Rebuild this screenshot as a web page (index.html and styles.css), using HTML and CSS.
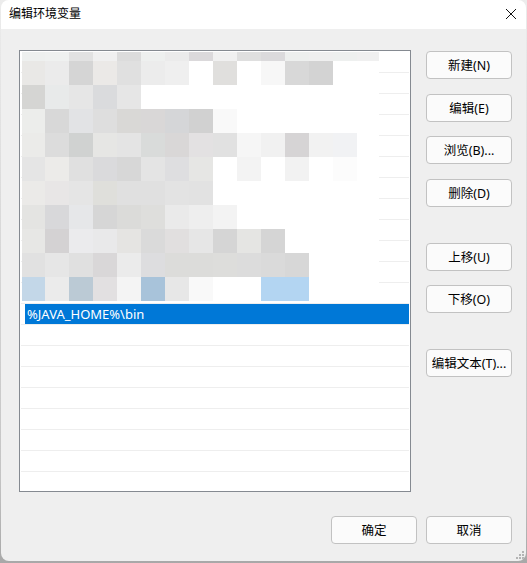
FILE: index.html
```html
<!DOCTYPE html>
<html lang="zh-CN">
<head>
<meta charset="utf-8">
<title>编辑环境变量</title>
<link rel="stylesheet" href="styles.css">
</head>
<body>
<div class="window">
  <header class="titlebar">
    <span class="title">编辑环境变量</span>
    <svg class="close" width="10" height="10" viewBox="0 0 10 10"><path d="M0 0L10 10M10 0L0 10" stroke="#111" stroke-width="1" fill="none"/></svg>
  </header>
  <main class="body">
    <div class="top">
      <div class="list">
        <div class="row"></div><div class="row"></div><div class="row"></div><div class="row"></div>
        <div class="row"></div><div class="row"></div><div class="row"></div><div class="row"></div>
        <div class="row"></div><div class="row"></div><div class="row"></div><div class="row"></div>
        <div class="row"><div class="selected">%JAVA_HOME%\bin</div></div>
        <div class="row"></div><div class="row"></div><div class="row"></div><div class="row"></div>
        <div class="row"></div><div class="row"></div><div class="row"></div>
        <svg class="mosaic" width="357" height="249" viewBox="0 0 357 249" shape-rendering="crispEdges">
          <rect width="357" height="249" fill="#fff"/>
          <g>
            <rect x="0" y="0" width="23" height="9" fill="#eef0ef"/><rect x="23" y="0" width="24" height="9" fill="#eff1f0"/><rect x="47" y="0" width="24" height="9" fill="#e2e2e2"/><rect x="71" y="0" width="24" height="9" fill="#f0f0f0"/><rect x="95" y="0" width="24" height="9" fill="#dcdcdc"/><rect x="119" y="0" width="24" height="9" fill="#eef0ef"/><rect x="143" y="0" width="24" height="9" fill="#ebebeb"/><rect x="167" y="0" width="24" height="9" fill="#dbd9db"/><rect x="191" y="0" width="24" height="9" fill="#f0f0f0"/><rect x="215" y="0" width="24" height="9" fill="#dfdfdf"/><rect x="239" y="0" width="24" height="9" fill="#dbdadc"/><rect x="263" y="0" width="24" height="9" fill="#edefee"/><rect x="287" y="0" width="24" height="9" fill="#efefef"/><rect x="311" y="0" width="24" height="9" fill="#eef0ef"/><rect x="335" y="0" width="22" height="9" fill="#f0f0f0"/>
          </g>
          <g>
            <rect x="0" y="9" width="23" height="24" fill="#e9e8e6"/><rect x="23" y="9" width="24" height="24" fill="#ebebeb"/><rect x="47" y="9" width="24" height="24" fill="#d5d5d5"/><rect x="71" y="9" width="24" height="24" fill="#ebe9e7"/><rect x="95" y="9" width="24" height="24" fill="#e0e0e0"/><rect x="119" y="9" width="24" height="24" fill="#ececec"/><rect x="143" y="9" width="24" height="24" fill="#efefef"/><rect x="191" y="9" width="24" height="24" fill="#e0dfdd"/><rect x="239" y="9" width="24" height="24" fill="#f7f7f7"/><rect x="263" y="9" width="24" height="24" fill="#d8d8d8"/><rect x="287" y="9" width="24" height="24" fill="#d3d3d3"/>
          </g>
          <g>
            <rect x="0" y="33" width="23" height="24" fill="#d5d5d3"/><rect x="23" y="33" width="24" height="24" fill="#e8eaea"/><rect x="47" y="33" width="24" height="24" fill="#e6e6e6"/><rect x="71" y="33" width="24" height="24" fill="#dadbdd"/><rect x="95" y="33" width="24" height="24" fill="#e6e6e6"/>
          </g>
          <g>
            <rect x="0" y="57" width="23" height="24" fill="#ecedeb"/><rect x="23" y="57" width="24" height="24" fill="#d8d8d8"/><rect x="47" y="57" width="24" height="24" fill="#e2e3e5"/><rect x="71" y="57" width="24" height="24" fill="#dedede"/><rect x="95" y="57" width="24" height="24" fill="#d9d8d6"/><rect x="119" y="57" width="24" height="24" fill="#d9d7d7"/><rect x="143" y="57" width="24" height="24" fill="#d5d6d8"/><rect x="167" y="57" width="24" height="24" fill="#d1d1d1"/><rect x="191" y="57" width="24" height="24" fill="#f9f9f9"/>
          </g>
          <g>
            <rect x="0" y="81" width="23" height="24" fill="#ebebe9"/><rect x="23" y="81" width="24" height="24" fill="#dcdcdc"/><rect x="47" y="81" width="24" height="24" fill="#d0d2d1"/><rect x="71" y="81" width="24" height="24" fill="#e6e6e4"/><rect x="95" y="81" width="24" height="24" fill="#e4e4e4"/><rect x="119" y="81" width="24" height="24" fill="#d9dbda"/><rect x="143" y="81" width="24" height="24" fill="#d9d7d7"/><rect x="167" y="81" width="24" height="24" fill="#e3e1e2"/><rect x="191" y="81" width="24" height="24" fill="#e1e1e1"/><rect x="215" y="81" width="24" height="24" fill="#f6f6f6"/><rect x="239" y="81" width="24" height="24" fill="#f1f1f1"/><rect x="263" y="81" width="24" height="24" fill="#d6d4d5"/><rect x="287" y="81" width="24" height="24" fill="#f2f2f2"/><rect x="311" y="81" width="24" height="24" fill="#f1f2f4"/>
          </g>
          <g>
            <rect x="0" y="105" width="23" height="24" fill="#e5e5e5"/><rect x="23" y="105" width="24" height="24" fill="#ecebe9"/><rect x="47" y="105" width="24" height="24" fill="#e0e0e0"/><rect x="71" y="105" width="24" height="24" fill="#dadadc"/><rect x="95" y="105" width="24" height="24" fill="#d7d7d7"/><rect x="119" y="105" width="24" height="24" fill="#e4e4e4"/><rect x="143" y="105" width="24" height="24" fill="#dedee0"/><rect x="167" y="105" width="24" height="24" fill="#e6e6e4"/><rect x="215" y="105" width="24" height="24" fill="#f3f3f3"/><rect x="263" y="105" width="24" height="24" fill="#f2f2f2"/><rect x="311" y="105" width="24" height="24" fill="#fcfcfc"/>
          </g>
          <g>
            <rect x="0" y="129" width="23" height="24" fill="#ebeae8"/><rect x="23" y="129" width="24" height="24" fill="#e8e6e6"/><rect x="47" y="129" width="24" height="24" fill="#e5e5e5"/><rect x="71" y="129" width="24" height="24" fill="#dfdfdb"/><rect x="95" y="129" width="24" height="24" fill="#e0e0e0"/><rect x="119" y="129" width="24" height="24" fill="#e0e0e0"/><rect x="143" y="129" width="24" height="24" fill="#e3e3e3"/><rect x="167" y="129" width="24" height="24" fill="#e2e2e2"/>
          </g>
          <g>
            <rect x="0" y="153" width="23" height="24" fill="#e4e4e2"/><rect x="23" y="153" width="24" height="24" fill="#d8d8da"/><rect x="47" y="153" width="24" height="24" fill="#e6e7e9"/><rect x="71" y="153" width="24" height="24" fill="#d6d6d6"/><rect x="95" y="153" width="24" height="24" fill="#dbdbd9"/><rect x="119" y="153" width="24" height="24" fill="#dededc"/><rect x="143" y="153" width="24" height="24" fill="#eaeaea"/><rect x="167" y="153" width="24" height="24" fill="#eeeeee"/><rect x="191" y="153" width="24" height="24" fill="#f3f3f3"/>
          </g>
          <g>
            <rect x="0" y="177" width="23" height="24" fill="#e7e7e5"/><rect x="23" y="177" width="24" height="24" fill="#d4d2d3"/><rect x="47" y="177" width="24" height="24" fill="#ebebed"/><rect x="71" y="177" width="24" height="24" fill="#e9e9ea"/><rect x="95" y="177" width="24" height="24" fill="#e5e4e2"/><rect x="119" y="177" width="24" height="24" fill="#dadada"/><rect x="143" y="177" width="24" height="24" fill="#e1dfdf"/><rect x="167" y="177" width="24" height="24" fill="#e6e6e6"/><rect x="191" y="177" width="24" height="24" fill="#d5d5d5"/><rect x="215" y="177" width="24" height="24" fill="#e5e5e3"/><rect x="239" y="177" width="24" height="24" fill="#d5d5d5"/>
          </g>
          <g>
            <rect x="0" y="201" width="23" height="24" fill="#e1e1e1"/><rect x="23" y="201" width="24" height="24" fill="#e6e6e6"/><rect x="47" y="201" width="24" height="24" fill="#e0e0e0"/><rect x="71" y="201" width="24" height="24" fill="#d9d7d8"/><rect x="95" y="201" width="24" height="24" fill="#ebebeb"/><rect x="119" y="201" width="24" height="24" fill="#dddddf"/><rect x="143" y="201" width="24" height="24" fill="#dcdcda"/><rect x="167" y="201" width="24" height="24" fill="#dcdcda"/><rect x="191" y="201" width="24" height="24" fill="#dddddb"/><rect x="215" y="201" width="24" height="24" fill="#dcdcdc"/><rect x="239" y="201" width="24" height="24" fill="#dadada"/><rect x="263" y="201" width="24" height="24" fill="#d7d7d7"/>
          </g>
          <g>
            <rect x="0" y="225" width="23" height="24" fill="#c3d7e8"/><rect x="23" y="225" width="24" height="24" fill="#ebebeb"/><rect x="47" y="225" width="24" height="24" fill="#bbcad5"/><rect x="71" y="225" width="24" height="24" fill="#e2e0e1"/><rect x="95" y="225" width="24" height="24" fill="#f4f4f4"/><rect x="119" y="225" width="24" height="24" fill="#a8c3da"/><rect x="143" y="225" width="24" height="24" fill="#e7e7e7"/><rect x="167" y="225" width="24" height="24" fill="#f9f9f9"/><rect x="239" y="225" width="48" height="24" fill="#b3d5f2"/>
          </g>
        </svg>
      </div>
      <div class="side">
        <button class="btn">新建(N)</button>
        <button class="btn gap-15">编辑(E)</button>
        <button class="btn gap-14">浏览(B)...</button>
        <button class="btn gap-15">删除(D)</button>
        <button class="btn gap-36">上移(U)</button>
        <button class="btn gap-14">下移(O)</button>
        <button class="btn gap-36">编辑文本(T)...</button>
      </div>
    </div>
    <div class="footer">
      <button class="btn">确定</button>
      <button class="btn">取消</button>
    </div>
    <svg class="grip" width="10" height="9" viewBox="0 0 10 9" shape-rendering="crispEdges" fill="#b4b4b4">
      <rect x="7" y="0" width="2" height="2"/>
      <rect x="4" y="3" width="2" height="2"/><rect x="7" y="3" width="2" height="2"/>
      <rect x="1" y="6" width="2" height="2"/><rect x="4" y="6" width="2" height="2"/><rect x="7" y="6" width="2" height="2"/>
    </svg>
  </main>
</div>
</body>
</html>
```

FILE: styles.css
```css
* {
  box-sizing: border-box;
}

html,
body {
  height: 100%;
  margin: 0;
}

body {
  padding: 0 1px 2px 1px;
  background: linear-gradient(#ececec, #c4c4c4 85%, #a8a8a8);
  overflow: hidden;
  font-family: "Noto Sans", "Noto Sans CJK SC", sans-serif;
  color: #000;
}

.window {
  display: flex;
  flex-direction: column;
  height: 100%;
  border-radius: 8px;
  overflow: hidden;
  background: #efefef;
}

.titlebar {
  display: flex;
  flex: 0 0 29px;
  align-items: center;
  justify-content: space-between;
  padding: 0 10px 1px 8px;
  background: #fff;
}

.title {
  font-size: 12px;
  line-height: 16px;
}

.close {
  margin-bottom: 1px;
}

.body {
  position: relative;
  display: flex;
  flex: 1;
  flex-direction: column;
  padding: 21px 14px 0 18px;
}

.top {
  display: flex;
  gap: 15px;
}

.list {
  position: relative;
  flex: 0 0 392px;
  height: 442px;
  padding: 1px 1px 0 1px;
  background: #fff;
  border: 1px solid #858a91;
}

.row {
  height: 21px;
  border-bottom: 1px solid #eeeeee;
}

.selected {
  height: 20px;
  margin-left: 4px;
  padding-left: 2px;
  background: #0078d7;
  color: #fff;
  font-size: 13px;
  line-height: 20px;
  white-space: nowrap;
}

.mosaic {
  position: absolute;
  top: 1px;
  left: 2px;
  display: block;
}

.side {
  display: flex;
  flex: 0 0 86px;
  flex-direction: column;
  padding-top: 1px;
}

.btn {
  display: block;
  width: 86px;
  height: 28px;
  padding: 0 0 2px;
  background: #fbfbfb;
  border: 1px solid #c2c2c2;
  border-radius: 4px;
  color: #000;
  font-family: inherit;
  font-size: 12.5px;
  white-space: nowrap;
}

.gap-14 {
  margin-top: 14px;
}

.gap-15 {
  margin-top: 15px;
}

.gap-36 {
  margin-top: 36px;
}

.footer {
  display: flex;
  justify-content: flex-end;
  gap: 9px;
  margin-top: 24px;
}

.grip {
  position: absolute;
  right: 1px;
  bottom: 1px;
}
```
